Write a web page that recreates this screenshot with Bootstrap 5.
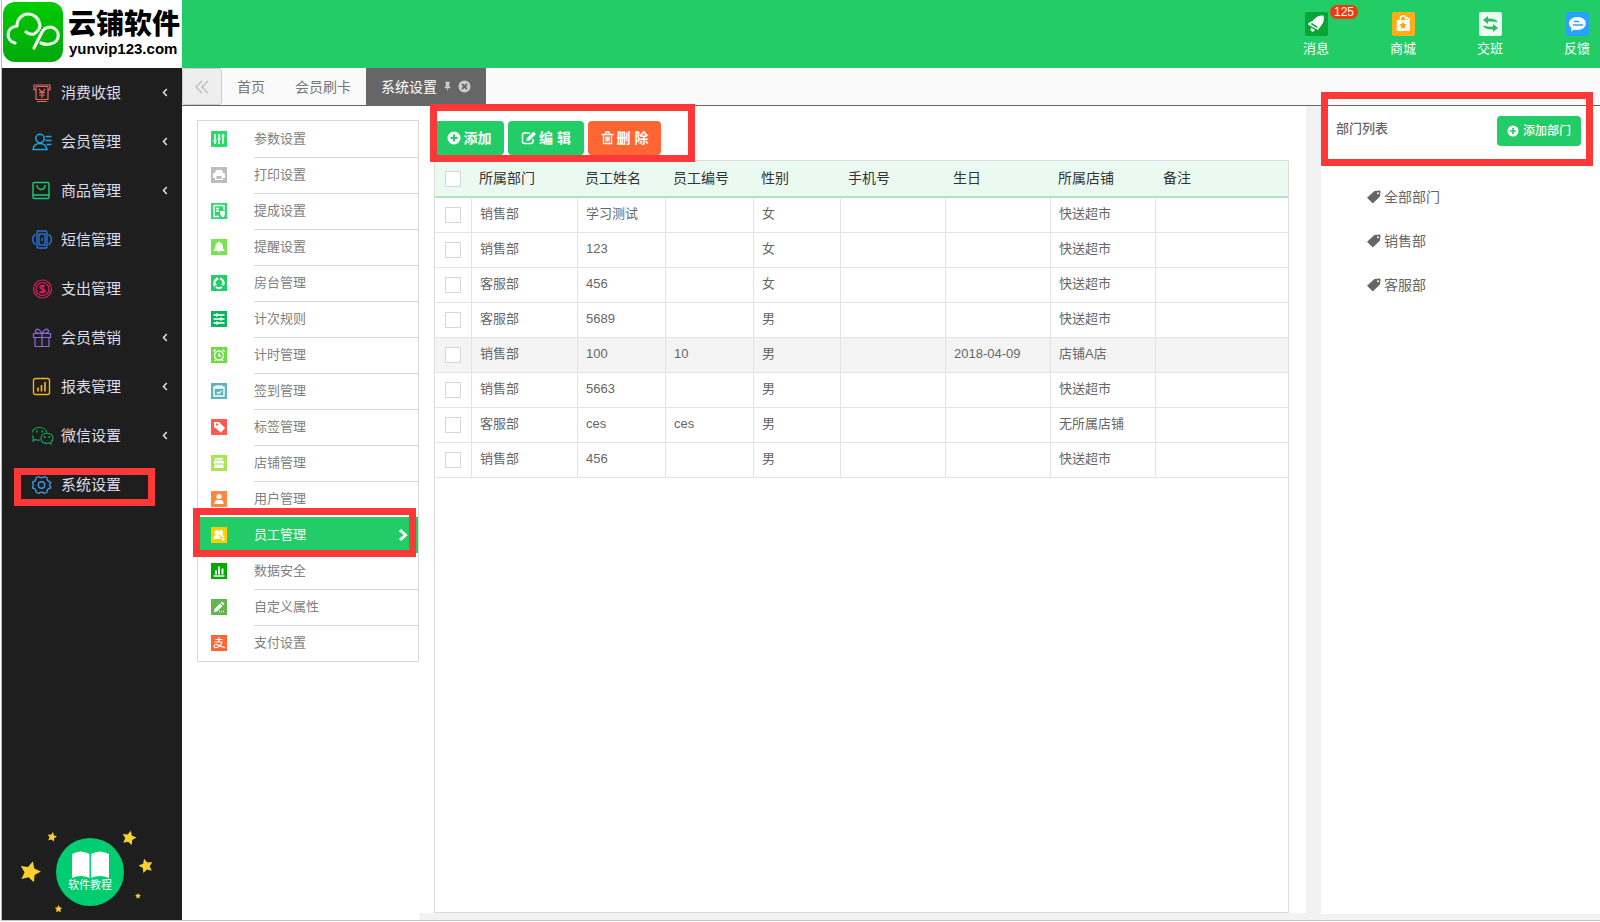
<!DOCTYPE html>
<html lang="zh-CN">
<head>
<meta charset="utf-8">
<meta name="viewport" content="width=device-width, initial-scale=1">
<title>云铺软件 - 员工管理</title>
<link href="https://cdn.jsdelivr.net/npm/bootstrap@5.3.0/dist/css/bootstrap.min.css" rel="stylesheet">
<style>
:root{--green:#22cc66;--mark:#fc3838}
body{font-family:"Liberation Sans","Noto Sans CJK SC",sans-serif;font-size:13px;line-height:20px;color:#666;background:#fff}
a{color:inherit;text-decoration:none}
svg{display:block;flex:none}
.shell{margin:0 0 1px 1px;min-height:calc(100vh - 1px);border-left:1px solid #bbb;border-bottom:1px solid #c4c4c4}
.side{width:180px;flex:none;background:#1e1e1e}
.brand{height:68px;background:#fff;color:#000;padding:1px}
.brand-cn{font:900 28px/34px "Noto Sans CJK SC",sans-serif;white-space:nowrap}
.brand-en{font:bold 15px/20px "Liberation Sans Narrow","Liberation Sans",sans-serif;padding-left:1px}
.side-nav a{height:49px;font-size:15px;color:#dcdcea;padding:0 14px 0 30px}
.side-nav .ico{width:22px;margin-right:7px}
.line-ico{fill:none;stroke:currentColor;stroke-width:1.2}
.side-nav a:nth-child(1) .ico{color:#e8655c}
.side-nav a:nth-child(2) .ico{color:#1aa7e0}
.side-nav a:nth-child(3) .ico{color:#1fc777}
.side-nav a:nth-child(4) .ico{color:#2b6fd0}
.side-nav a:nth-child(5) .ico{color:#e0205c}
.side-nav a:nth-child(6) .ico{color:#8d68d8}
.side-nav a:nth-child(7) .ico{color:#f5b021}
.side-nav a:nth-child(8) .ico{color:#12a35a}
.side-nav a:nth-child(9) .ico{color:#3c97d8}
.outline-mark{position:absolute;border:7px solid var(--mark);pointer-events:none;z-index:3}
.mark-side{left:12px;top:8px;width:141px;height:38px}
.mark-sub{left:-5px;right:2px;top:-9px;height:49px}
.mark-tools{left:-4px;top:-17px;width:265px;height:58px}
.mark-dept{left:0;right:7px;top:-14px;height:74px}
.tutorial{color:#fff;padding-bottom:8px}
.tutorial svg{width:100%;height:auto}
.topbar{height:68px;background:var(--green);color:#fff;padding-right:10px;gap:61px}
.topbar a{width:26px;padding-top:12px}
.topbar .label{line-height:20px;margin-top:3px;white-space:nowrap}
.msg-badge{position:absolute;left:27px;top:5px;width:28px;height:14px;border-radius:7px;background:#ee3b0b;font-size:12px;line-height:14px;text-align:center}
.tabs{height:38px;background:#fafafa;border-bottom:1px solid #666;font-size:14px;color:#777}
.tabs .fold{width:40px;border:1px solid #ccc;border-radius:3px;background:#eee;color:#bbb}
.tabs a{padding:0 15px}
.tabs .current{background:#666;color:#fff;gap:7px}
.sub-col{padding:14px 0 15px 15px;width:237px;flex:none}
.sub-nav{border:1px solid #d8d8d8;color:#808080}
.sub-nav a{height:36px;padding-left:13px}
.sub-nav .txt{margin-left:27px;line-height:33px;height:36px;position:relative;border-top:1px solid #d8d8d8}
.sub-nav a:first-child .txt,.sub-nav .on .txt,.sub-nav .on + a .txt{border-color:transparent}
.sub-nav .on{background:var(--green);color:#fff}
.sub-nav .go{margin-right:9px}
.tile{width:16px;height:16px;fill:none;stroke:#fff;stroke-width:1.4;background:#2dd96f}
.tile .f{fill:#fff;stroke:none}
.sub-nav a:nth-child(2) .tile{background:#bdbdbd}
.sub-nav a:nth-child(4) .tile{background:#77e552}
.sub-nav a:nth-child(5) .tile{background:#22cc66}
.sub-nav a:nth-child(6) .tile{background:#09b45e}
.sub-nav a:nth-child(7) .tile{background:#69dd41}
.sub-nav a:nth-child(8) .tile{background:#5cb3c1}
.sub-nav a:nth-child(9) .tile{background:#ff5b4f}
.sub-nav a:nth-child(10) .tile{background:#abe45b}
.sub-nav a:nth-child(11) .tile{background:#ff8740}
.sub-nav a:nth-child(12) .tile{background:#fc0}
.sub-nav a:nth-child(13) .tile{background:#0a0}
.sub-nav a:nth-child(14) .tile{background:#64b54c}
.sub-nav a:nth-child(15) .tile{background:#f63}
.grey{background:#f2f2f2;min-width:0}
.work{padding:15px 17px 0 15px;margin-bottom:7px;min-width:0;background:#fff}
.tools{gap:4px;margin-bottom:5px}
.tools .btn,.dept .btn{border:0;border-radius:4px;color:#fff;background:var(--green);padding:0;font-weight:500}
.tools .btn{height:34px;font-size:14px;gap:3px;font-weight:700}
.w-add{width:70px}.w-edit{width:76px}.w-del{width:73px}
.tools .btn.w-del{background:#ff6633}
.panel{border:1px solid #dcdcdc}
.staff{table-layout:fixed;border-collapse:separate;border-spacing:0;margin:0;width:100%}
.staff th{height:37px;background:#ebfaf0;border-bottom:2px solid #aee3c3;font-weight:400;font-size:14px;color:#333;padding:0 0 2px 7px}
.staff td{height:35px;border-bottom:1px solid #e4e4e4;border-right:1px solid #e4e4e4;padding:0 0 2px 8px}
.staff td:last-child{border-right:0}
.staff th:first-child,.staff td:first-child{padding:0 0 0 10px}
.staff tr.hover td{background:#f4f4f4}
.staff input{appearance:none;width:16px;height:16px;border:1px solid #d6d6d6;background:#fff;display:block;margin:0}
.c0{width:37px}.c1{width:106px}.c2{width:88px}.c3{width:87px}.c4{width:105px}
.dept-col{width:294px;flex:none;padding:0 0 6px 15px}
.dept{background:#fff}
.dept-head{padding:10px 19px 0 15px;height:60px}
.dept-title{line-height:26px;font-weight:500}
.dept .btn{width:84px;height:30px;font-size:12px;gap:4px}
.dept-list{padding-left:46px;margin-top:9px;font-size:14px}
.dept-list a{height:44px;gap:3px}
</style>
</head>
<body>
<svg width="0" height="0" class="position-absolute" aria-hidden="true">
  <symbol id="chev" viewBox="0 0 6 9"><path d="M4.800 1 1.500 4.500 4.800 8" fill="none" stroke="currentColor" stroke-width="1.600"/></symbol>
  <symbol id="plus" viewBox="0 0 14 14"><path fill="currentColor" fill-rule="evenodd" d="M7 .5a6.500 6.500 0 1 0 0 13 6.500 6.500 0 0 0 0-13ZM6 3.500h2V6h2.500v2H8v2.500H6V8H3.500V6H6Z"/></symbol>
  <symbol id="tag" viewBox="0 0 14 14"><path fill="currentColor" fill-rule="evenodd" d="M7.500 1 13 .5 13.500 1 13 6.500 5.800 13.500 0 7.800ZM11 2.200a1 1 0 1 0 0 2 1 1 0 0 0 0-2Z"/></symbol>
  <symbol id="star" viewBox="-10 -10 20 20"><path fill="#f8d030" d="M0-10 2.900-4 9.500-3.100 4.700 1.500 5.900 8.100 0 5-5.900 8.100-4.700 1.500-9.500-3.100-2.900-4Z"/></symbol>
</svg>

<div class="shell d-flex">
  <aside class="side d-flex flex-column">
    <a href="#" class="brand d-flex">
      <svg width="61" height="62" viewBox="0 0 61 62"><defs><linearGradient id="lg" x2="0" y2="1"><stop stop-color="#0c0"/><stop offset="1" stop-color="#00a80c"/></linearGradient></defs><rect y="1" width="60" height="60" rx="12" fill="url(#lg)"/><path d="M12 42C2 39 3 26 14 25 14 10 35 8 37 25Q36 30 31 33 27 34 23 31M31 47l7-14q3-7 9-7c11 1 11 16 0 17q-5 1-9-1" fill="none" stroke="#e8ffe8" stroke-width="3.200" stroke-linecap="round" stroke-linejoin="round"/></svg>
      <div class="ps-1 pt-1"><div class="brand-cn">云铺软件</div><div class="brand-en">yunvip123.com</div></div>
    </a>
    <nav class="side-nav">
      <a href="#" class="d-flex align-items-center"><span class="ico"><svg class="line-ico" width="20" height="20"><path d="M4 7H2V2h16v5h-2M4 3.500h12M4 4v12.500h12V4M5 18.500h10M7 6l3 3.500L13 6M7 9.500h6M7 12h6M10 9.500V15"/></svg></span>消费收银<svg class="ms-auto" width="6" height="9"><use href="#chev"/></svg></a>
      <a href="#" class="d-flex align-items-center"><span class="ico"><svg class="line-ico" width="20" height="18"><g stroke-width="1.500"><circle cx="8" cy="5.500" r="4.200"/><path d="M1 16.500C1.500 12 4.500 10.500 8 10.500s6 1.500 7 6ZM13.500 3.500h6M13.500 7.500h6M14.500 11.500h5"/></g></svg></span>会员管理<svg class="ms-auto" width="6" height="9"><use href="#chev"/></svg></a>
      <a href="#" class="d-flex align-items-center"><span class="ico"><svg class="line-ico" width="19" height="19"><g stroke-width="1.400"><rect x="1" y="1.500" width="16" height="16" rx="1"/><path d="M1 14h16M5 4c0 6 8 6 8 0"/></g></svg></span>商品管理<svg class="ms-auto" width="6" height="9"><use href="#chev"/></svg></a>
      <a href="#" class="d-flex align-items-center"><span class="ico"><svg class="line-ico" width="21" height="19"><g stroke-width="1.400"><rect x="5" y="1" width="10" height="17" rx="1"/><rect x="7" y="4" width="6" height="11"/><path d="M10 8v3M3.500 4.500c-4 2-4 8 0 10M16.500 4.500c4 2 4 8 0 10"/></g></svg></span>短信管理</a>
      <a href="#" class="d-flex align-items-center"><span class="ico"><svg class="line-ico" width="21" height="20"><circle cx="10.500" cy="10" r="9"/><circle cx="10.500" cy="10" r="6.500"/><path stroke-width="1.500" d="M13 7.500c-2-1.500-5-1-5 .8C8 10.500 13 9.500 13 12c0 2-4 2-5.200.6M10.500 5.500v9"/></svg></span>支出管理</a>
      <a href="#" class="d-flex align-items-center"><span class="ico"><svg class="line-ico" width="20" height="20"><path d="M1.500 5.500h17v4h-17ZM3 9.500v9h14v-9M10 5.500v13M10 5.500C5 5.500 2 4 4 2s4 0 6 3.500C12 2 14 0 16 2s-1 3.500-6 3.500"/></svg></span>会员营销<svg class="ms-auto" width="6" height="9"><use href="#chev"/></svg></a>
      <a href="#" class="d-flex align-items-center"><span class="ico"><svg class="line-ico" width="19" height="19"><rect x="1.500" y="1.500" width="16" height="16" rx="2" stroke-width="1.400"/><path stroke-width="1.700" d="M6 10.500v4M9.500 8v6.500M13 5v9.500"/></svg></span>报表管理<svg class="ms-auto" width="6" height="9"><use href="#chev"/></svg></a>
      <a href="#" class="d-flex align-items-center"><span class="ico"><svg class="line-ico" width="22" height="19" viewBox="1 0 22 19"><path d="M9 14c-2 .4-3 0-4.500-.5L2 15l.5-3C-2 8 2 1.500 8.500 1.500c4 0 7 2.500 7.500 5.500M22 12.500c0-7-12-7-12 0 0 4 4 5.500 8 4.500l2 1v-2q2-1.500 2-3.500Z"/><path stroke-width="1.800" d="M5 5.500h1.500M10.500 5.500H12M12.800 11h1.500M17.500 11H19"/></svg></span>微信设置<svg class="ms-auto" width="6" height="9"><use href="#chev"/></svg></a>
      <a href="#" class="d-flex align-items-center position-relative"><span class="ico"><svg class="line-ico" width="20" height="20"><g stroke-width="1.400"><circle cx="9.500" cy="10" r="3.200"/><path d="M6.500 1.500q3 2.500 6 0L15 3q0 3.500 3.500 4v1.500q-2 1.500 0 3V13q-3.500.5-3.500 4l-2.500 1.500q-3-2.500-6 0L4 17q0-3.500-3.500-4v-1.500q2-1.500 0-3V7Q4 6.500 4 3Z"/></g></svg></span>系统设置<span class="outline-mark mark-side"></span></a>
    </nav>
    <a href="#" class="tutorial mt-auto" aria-label="软件教程">
      <svg viewBox="0 0 180 84"><circle cx="88" cy="44" r="34" fill="#00cc70"/><path fill="#fff" d="M70 26q9-5 17.500 0v24q-8.500-4-17.500 0ZM89 26q9-5 18 0v24q-9-4-18 0Z"/><text x="88" y="61" text-anchor="middle" font-size="11" fill="#fff">软件教程</text>
      <use href="#star" x="-10" y="-10" width="20" height="20" transform="translate(28 44) rotate(15) scale(1.100)"/><use href="#star" x="-10" y="-10" width="20" height="20" transform="translate(127 10) rotate(14) scale(.75)"/><use href="#star" x="-10" y="-10" width="20" height="20" transform="translate(144 38) rotate(-15) scale(.75)"/><use href="#star" x="-10" y="-10" width="20" height="20" transform="translate(50 9) rotate(12) scale(.5)"/><use href="#star" x="-10" y="-10" width="20" height="20" transform="translate(56.500 81) scale(.4)"/><use href="#star" x="-10" y="-10" width="20" height="20" transform="translate(136 68) scale(.3)"/></svg>
    </a>
  </aside>

  <div class="flex-fill d-flex flex-column">
    <header class="topbar d-flex justify-content-end">
      <a href="#" class="position-relative d-flex flex-column align-items-center"><svg width="23" height="24"><rect width="23" height="24" rx="2" fill="#08a436"/><path fill="#fff" fill-rule="evenodd" d="M18.500 3.500Q20 9 16 14q-2 2-3 4L3 12.500 3.500 11Q7 10 10 6.500 13 3 18.500 3.500ZM5.500 12l6.500 4 .5-1.500-5.500-3.500ZM6 15.500l4 2.500-2 2-2.500-1.500Z"/></svg><span class="label">消息</span><span class="msg-badge">125</span></a>
      <a href="#" class="d-flex flex-column align-items-center"><svg width="23" height="24"><rect width="23" height="24" rx="2" fill="#ffac16"/><path fill="#fff" d="M5 8h12.500l.5 11H4.500Z"/><path d="M8 9C8 2 14 2 14.500 9M13 5l5 2.500" fill="none" stroke="#fff" stroke-width="1.500"/><path fill="#ffa010" d="m11 9.500 1.200 2.500 2.600.3-2 1.800.6 2.700-2.400-1.300-2.400 1.300.6-2.700-2-1.800 2.600-.3Z"/></svg><span class="label">商城</span></a>
      <a href="#" class="d-flex flex-column align-items-center"><svg width="23" height="24"><rect width="23" height="24" rx="2" fill="#eefbf3"/><path fill="#2dbb60" d="M4 8l5-4v2.500q9 0 9.500 4-3-1.500-9.500-1V12ZM19 16l-5-4v2.500q-7 .5-10-1 1 4 10 4V20Z"/></svg><span class="label">交班</span></a>
      <a href="#" class="d-flex flex-column align-items-center"><svg width="23" height="24"><rect width="23" height="24" rx="2" fill="#28a3fb"/><path fill="#fff" d="M11.500 5c11 0 11 13 0 13q-2 0-3-.5L5 19.500l.5-3.500C0 11 4 5 11.500 5Z"/><path stroke="#28a3fb" stroke-width="1.500" d="M8 9.500h5M7 13h10"/></svg><span class="label">反馈</span></a>
    </header>
    <nav class="tabs d-flex">
      <button class="fold d-flex align-items-center justify-content-center p-0" aria-label="收起"><svg width="14" height="14" fill="none" stroke="currentColor" stroke-width="1.300"><path d="M7 1 1 7l6 6M13 1 7 7l6 6"/></svg></button>
      <a href="#" class="d-flex align-items-center">首页</a>
      <a href="#" class="d-flex align-items-center">会员刷卡</a>
      <a href="#" class="current d-flex align-items-center">系统设置<svg width="7" height="12" viewBox="0 0 8 12"><path fill="#ccc" d="M1.500 0h5v1L6 1.500v3.500q1.500.5 1.500 2.500h-3L4 12 3.500 7.500h-3Q.5 5.500 2 5V1.500L1.500 1Z"/></svg><svg width="13" height="13"><circle cx="6.500" cy="6.500" r="6" fill="#ccc"/><path stroke="#666" stroke-width="1.800" d="m4 4 5 5M9 4 4 9"/></svg></a>
    </nav>
    <div class="flex-fill d-flex">
      <div class="sub-col">
        <nav class="sub-nav">
          <a href="#" class="d-flex align-items-center"><svg class="tile"><path d="M4 3v10M8 3v10M12 3v10M2.500 10h3M6.500 8h3M10.500 5h3"/></svg><span class="txt flex-fill">参数设置</span></a>
          <a href="#" class="d-flex align-items-center"><svg class="tile"><path class="f" fill-rule="evenodd" d="M5 3h6l1 3h1.500l.5 1v4h-2v2H4v-2H2V7l.5-1H4ZM5.500 9v3h5V9Z"/></svg><span class="txt flex-fill">打印设置</span></a>
          <a href="#" class="d-flex align-items-center"><svg class="tile"><path d="M13 7V2.500H3v11h5M5 5.500h3M5 8h3"/><path class="f" d="M9 8h5v3l-1 3h-2L9 11Z"/></svg><span class="txt flex-fill">提成设置</span></a>
          <a href="#" class="d-flex align-items-center"><svg class="tile"><path class="f" d="M8 2.500q1 0 1 1 3 1 3 6l1.500 2v.5h-11v-.5l1.500-2q0-5 3-6 0-1 1-1ZM6.500 12.500h3l-1.500 1Z"/></svg><span class="txt flex-fill">提醒设置</span></a>
          <a href="#" class="d-flex align-items-center"><svg class="tile"><path stroke-width="2" d="M3.500 9a5 5 0 0 1 2-5M9 3.500a5 5 0 0 1 3.500 5M11 12a5 5 0 0 1-6 0"/><path class="f" d="m5 2 3 2-3 2ZM14 7l-1 4-3-2ZM2 8l4 1-3 3Z"/></svg><span class="txt flex-fill">房台管理</span></a>
          <a href="#" class="d-flex align-items-center"><svg class="tile"><path d="M2.500 4h11M2.500 8h11M2.500 12h11"/><path class="f" d="M5 2.500h2v3H5ZM9 6.500h2v3H9ZM5 10.500h2v3H5Z"/></svg><span class="txt flex-fill">计次规则</span></a>
          <a href="#" class="d-flex align-items-center"><svg class="tile"><circle cx="8" cy="8.500" r="4.500"/><path d="M8 6v3h2M2.500 4.500l2-2M11.500 2.500l2 2M5 12.500 4 14M11 12.500l1 1.500"/></svg><span class="txt flex-fill">计时管理</span></a>
          <a href="#" class="d-flex align-items-center"><svg class="tile"><path d="M3 4h10v9H3ZM3 5h10M5.500 2v3M8 2v3M10.500 2v3M6 9l1.500 1.500L10.500 8"/></svg><span class="txt flex-fill">签到管理</span></a>
          <a href="#" class="d-flex align-items-center"><svg class="tile"><path class="f" fill-rule="evenodd" d="M3 3h5l6 6-4 4.500L3 8ZM5 4.500v2h2v-2Z"/></svg><span class="txt flex-fill">标签管理</span></a>
          <a href="#" class="d-flex align-items-center"><svg class="tile"><path class="f" d="M4 3h8v1.500H4ZM3.500 5.500h9l1 2.500q-1.500 1.500-2.800 0-1.300 1.500-2.700 0-1.400 1.500-2.700 0-1.300 1.500-2.800 0ZM3.500 9.500h9V13h-9Z"/></svg><span class="txt flex-fill">店铺管理</span></a>
          <a href="#" class="d-flex align-items-center"><svg class="tile"><circle class="f" cx="8" cy="5.500" r="2.600"/><path class="f" d="M3.500 13q0-4 3-4h3q3 0 3 4Z"/></svg><span class="txt flex-fill">用户管理</span></a>
          <a href="#" class="on d-flex align-items-center position-relative"><svg class="tile"><circle class="f" cx="6" cy="5.500" r="2.500"/><path class="f" d="M2.500 12q0-4 3-4h1q3 0 3 4ZM9 3q4 0 3 4l-1 1q2 0 2.500 2H10q0-2-2-2.500Z"/><circle class="f" cx="12" cy="12" r="1.500"/></svg><span class="txt flex-fill">员工管理</span><svg class="go" width="11" height="14"><path d="m2 2 5.500 5L2 12" fill="none" stroke="#fff" stroke-width="3"/></svg><span class="outline-mark mark-sub"></span></a>
          <a href="#" class="d-flex align-items-center"><svg class="tile"><path d="M2.500 13h11"/><path stroke-width="2" d="M5 7.500v4M8 3.500v8M11.500 5.500v6"/></svg><span class="txt flex-fill">数据安全</span></a>
          <a href="#" class="d-flex align-items-center"><svg class="tile"><path class="f" d="m3 13 .5-3L9 4.500 11.500 7 6 12.500ZM9.800 3.700 11 2.500 13.500 5l-1.200 1.200Z"/><path stroke-dasharray="1 1" d="M8 12.500h5"/></svg><span class="txt flex-fill">自定义属性</span></a>
          <a href="#" class="d-flex align-items-center"><svg class="tile"><path stroke-width="1.200" d="M4.500 4.500h7M3.500 7h8M8 2.500V7M11 7q-1 3.500-4 5-4 1.500-4-1 .5-2.500 4-1 4 2 7 2.500"/></svg><span class="txt flex-fill">支付设置</span></a>
        </nav>
      </div>
      <main class="grey flex-fill d-flex">
        <section class="work flex-fill d-flex flex-column">
          <div class="tools d-flex position-relative">
            <button class="btn w-add d-flex align-items-center justify-content-center"><svg width="14" height="14"><use href="#plus"/></svg>添加</button>
            <button class="btn w-edit d-flex align-items-center justify-content-center"><svg width="15" height="14"><path d="M9 2H3.500Q1.500 2 1.500 4v6.500q0 2 2 2H10q2 0 2-2V8" fill="none" stroke="currentColor" stroke-width="1.500"/><path fill="currentColor" d="m5.500 10 .5-3L12.500.5 15 3 8.500 9.500Z"/></svg>编 辑</button>
            <button class="btn w-del d-flex align-items-center justify-content-center"><svg width="13" height="14" fill="none" stroke="currentColor" stroke-width="1.300"><path d="M.5 3.500h12M4 3.500l1-2.500h3l1 2.500M2.500 3.500v9h8v-9M5 5.500v5M6.500 5.500v5M8 5.500v5"/></svg>删 除</button>
            <span class="outline-mark mark-tools"></span>
          </div>
          <div class="panel flex-fill">
            <table class="staff">
              <colgroup><col class="c0"><col class="c1"><col class="c2"><col class="c2"><col class="c3"><col class="c4"><col class="c4"><col class="c4"><col></colgroup>
              <thead><tr><th><input type="checkbox" aria-label="全选"></th><th>所属部门</th><th>员工姓名</th><th>员工编号</th><th>性别</th><th>手机号</th><th>生日</th><th>所属店铺</th><th>备注</th></tr></thead>
              <tbody>
                <tr><td><input type="checkbox" aria-label="选择"></td><td>销售部</td><td>学习测试</td><td></td><td>女</td><td></td><td></td><td>快送超市</td><td></td></tr>
                <tr><td><input type="checkbox" aria-label="选择"></td><td>销售部</td><td>123</td><td></td><td>女</td><td></td><td></td><td>快送超市</td><td></td></tr>
                <tr><td><input type="checkbox" aria-label="选择"></td><td>客服部</td><td>456</td><td></td><td>女</td><td></td><td></td><td>快送超市</td><td></td></tr>
                <tr><td><input type="checkbox" aria-label="选择"></td><td>客服部</td><td>5689</td><td></td><td>男</td><td></td><td></td><td>快送超市</td><td></td></tr>
                <tr class="hover"><td><input type="checkbox" aria-label="选择"></td><td>销售部</td><td>100</td><td>10</td><td>男</td><td></td><td>2018-04-09</td><td>店铺A店</td><td></td></tr>
                <tr><td><input type="checkbox" aria-label="选择"></td><td>销售部</td><td>5663</td><td></td><td>男</td><td></td><td></td><td>快送超市</td><td></td></tr>
                <tr><td><input type="checkbox" aria-label="选择"></td><td>客服部</td><td>ces</td><td>ces</td><td>男</td><td></td><td></td><td>无所属店铺</td><td></td></tr>
                <tr><td><input type="checkbox" aria-label="选择"></td><td>销售部</td><td>456</td><td></td><td>男</td><td></td><td></td><td>快送超市</td><td></td></tr>
              </tbody>
            </table>
          </div>
        </section>
        <aside class="dept-col d-flex">
          <div class="dept flex-fill">
            <div class="dept-head d-flex justify-content-between align-items-start position-relative">
              <span class="dept-title">部门列表</span>
              <button class="btn d-flex align-items-center justify-content-center"><svg width="12" height="12"><use href="#plus"/></svg>添加部门</button>
              <span class="outline-mark mark-dept"></span>
            </div>
            <nav class="dept-list">
              <a href="#" class="d-flex align-items-center"><svg width="14" height="14"><use href="#tag"/></svg>全部部门</a>
              <a href="#" class="d-flex align-items-center"><svg width="14" height="14"><use href="#tag"/></svg>销售部</a>
              <a href="#" class="d-flex align-items-center"><svg width="14" height="14"><use href="#tag"/></svg>客服部</a>
            </nav>
          </div>
        </aside>
      </main>
    </div>
  </div>
</div>
<script src="https://cdn.jsdelivr.net/npm/bootstrap@5.3.0/dist/js/bootstrap.bundle.min.js"></script>
</body>
</html>
